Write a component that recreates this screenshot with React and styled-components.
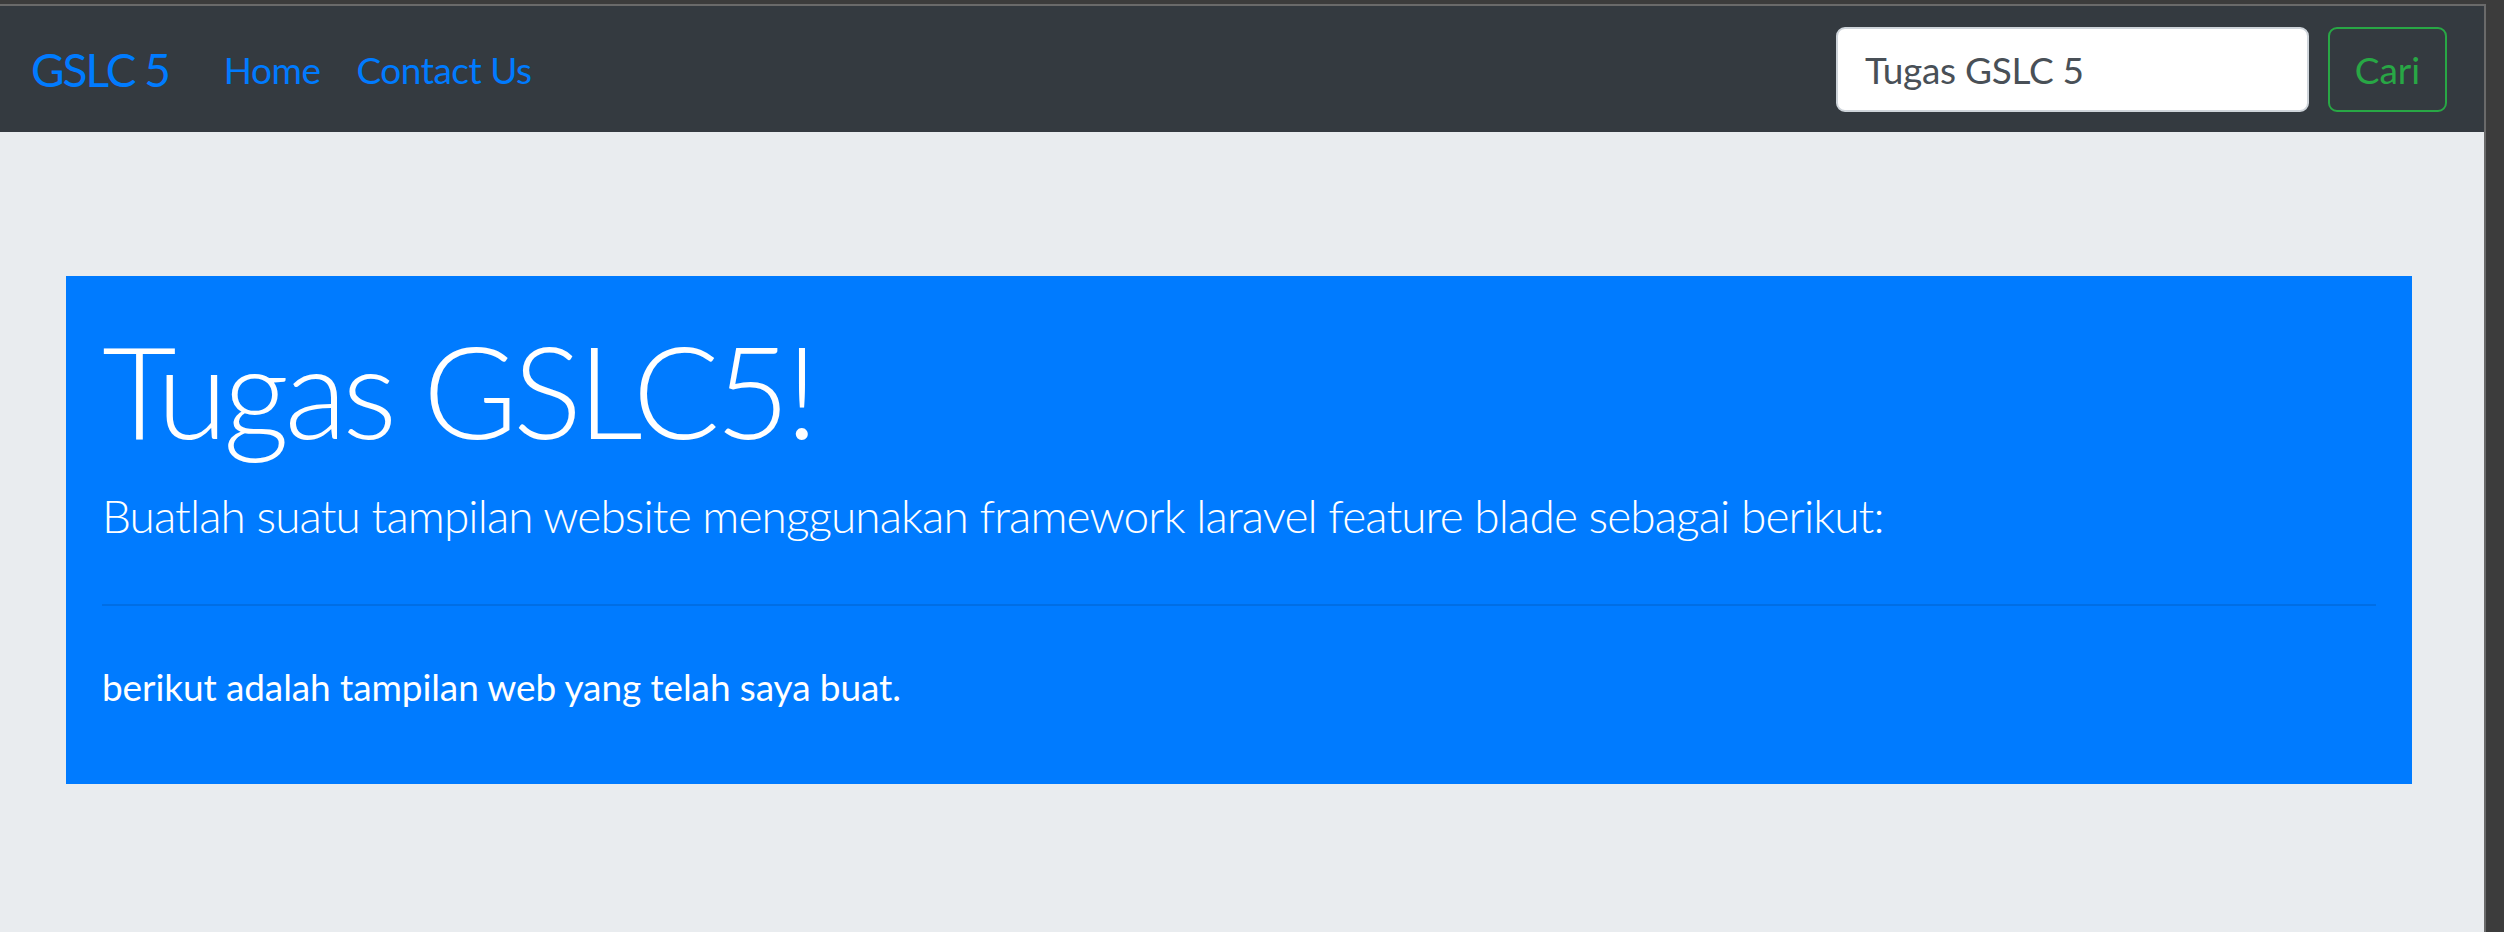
import React from "react";
import styled, { createGlobalStyle } from "styled-components";

const GlobalStyle = createGlobalStyle`
  html, body {
    margin: 0;
    padding: 0;
    background: #3c3c3c;
    overflow: hidden;
  }
  * { box-sizing: border-box; }
`;

const Window = styled.div`
  margin-top: 4px;
  width: 2486px;
  height: 928px;
  border-top: 2px solid #6a6a6a;
  border-right: 2px solid #6a6a6a;
  background: #e9ecef;
  font-family: Lato, "Open Sans", sans-serif;
  display: flex;
  flex-direction: column;
`;

const Navbar = styled.nav`
  height: 126px;
  background: #343a40;
  display: flex;
  align-items: center;
  padding: 0 37px 0 31px;
`;

const Brand = styled.a`
  font-size: 46px;
  line-height: 1.5;
  letter-spacing: -2px;
  color: #007bff;
  text-decoration: none;
  margin-right: 37px;
  white-space: nowrap;
`;

const NavList = styled.ul`
  display: flex;
  list-style: none;
  margin: 0;
  padding: 0;
  flex: 1;
`;

const NavLink = styled.a`
  display: block;
  font-size: 37px;
  line-height: 1.5;
  letter-spacing: -0.5px;
  padding: 2px 18px 0;
  color: #007bff;
  text-decoration: none;
  white-space: nowrap;
`;

const SearchForm = styled.form`
  display: flex;
  align-items: center;
  gap: 19px;
  margin: 0;
`;

const SearchInput = styled.input`
  width: 473px;
  height: 85px;
  padding: 0 27px;
  border: 2px solid #ced4da;
  border-radius: 9px;
  background: #fff;
  font-family: inherit;
  font-size: 37px;
  letter-spacing: -0.3px;
  color: #495057;
  outline: none;
`;

const SearchButton = styled.button`
  width: 119px;
  height: 85px;
  border: 2px solid #28a745;
  border-radius: 9px;
  background: transparent;
  color: #28a745;
  font-family: inherit;
  font-size: 37px;
  padding: 0;
  cursor: pointer;
`;

const Main = styled.main`
  padding: 144px 72px 0 66px;
`;

const Jumbotron = styled.section`
  background: #007bff;
  color: #fff;
  padding: 36px 36px 70px 36px;
`;

const Title = styled.h1`
  margin: 0 0 14px;
  font-size: 129px;
  font-weight: 300;
  line-height: 1.2;
  letter-spacing: -4.6px;
`;

const Lead = styled.p`
  margin: 0;
  font-size: 46px;
  font-weight: 300;
  line-height: 1.5;
  letter-spacing: -0.9px;
`;

const Divider = styled.hr`
  margin: 54px 0 53px;
  border: 0;
  border-top: 2px solid rgba(0, 0, 0, 0.1);
`;

const Text = styled.p`
  margin: 0;
  font-size: 37px;
  line-height: 1.5;
  letter-spacing: -0.1px;
`;

export default function App() {
  return (
    <>
      <GlobalStyle />
      <Window>
        <Navbar>
          <Brand href="#">GSLC 5</Brand>
          <NavList>
            <li><NavLink href="#">Home</NavLink></li>
            <li><NavLink href="#">Contact Us</NavLink></li>
          </NavList>
          <SearchForm onSubmit={(e) => e.preventDefault()}>
            <SearchInput type="search" defaultValue="Tugas GSLC 5" />
            <SearchButton type="submit">Cari</SearchButton>
          </SearchForm>
        </Navbar>
        <Main>
          <Jumbotron>
            <Title>Tugas GSLC5!</Title>
            <Lead>Buatlah suatu tampilan website menggunakan framework laravel feature blade sebagai berikut:</Lead>
            <Divider />
            <Text>berikut adalah tampilan web yang telah saya buat.</Text>
          </Jumbotron>
        </Main>
      </Window>
    </>
  );
}
